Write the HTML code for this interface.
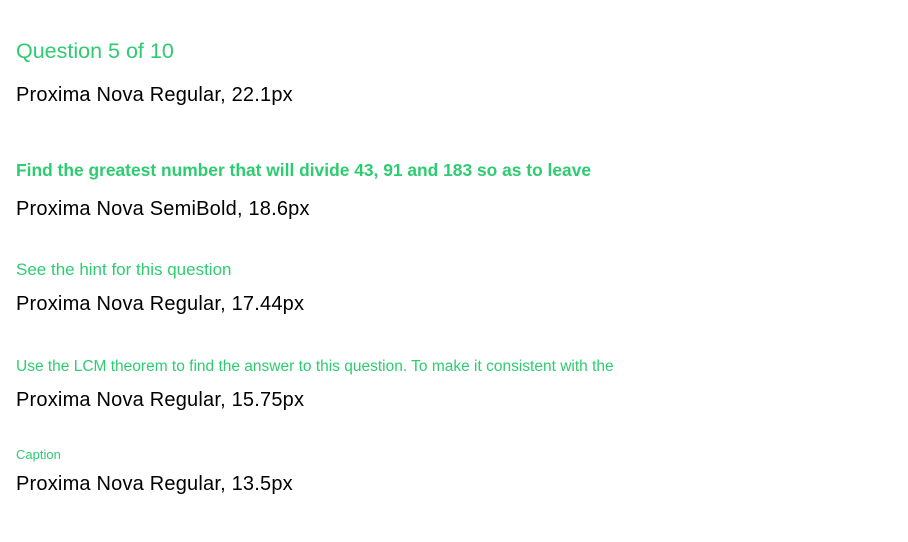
<!DOCTYPE html>
<html><head><meta charset="utf-8"><style>
body{margin:0;width:908px;height:542px;background:#fff;position:relative;overflow:hidden;font-family:"Liberation Sans",sans-serif}
div{position:absolute;left:16px;white-space:nowrap;line-height:1}
.g{color:#2ecc71}
.k{color:#000;font-size:20px;letter-spacing:0.2px}
</style></head><body>
<div class="g" style="top:41px;font-size:21.5px">Question 5 of 10</div>
<div class="k" style="top:85px">Proxima Nova Regular, 22.1px</div>
<div class="g" style="top:162px;font-size:17.4px;font-weight:bold">Find the greatest number that will divide 43, 91 and 183 so as to leave</div>
<div class="k" style="top:199px">Proxima Nova SemiBold, 18.6px</div>
<div class="g" style="top:261px;font-size:17px">See the hint for this question</div>
<div class="k" style="top:294px">Proxima Nova Regular, 17.44px</div>
<div class="g" style="top:359px;font-size:15.5px">Use the LCM theorem to find the answer to this question. To make it consistent with the</div>
<div class="k" style="top:390px">Proxima Nova Regular, 15.75px</div>
<div class="g" style="top:448px;font-size:13px">Caption</div>
<div class="k" style="top:474px">Proxima Nova Regular, 13.5px</div>
</body></html>
